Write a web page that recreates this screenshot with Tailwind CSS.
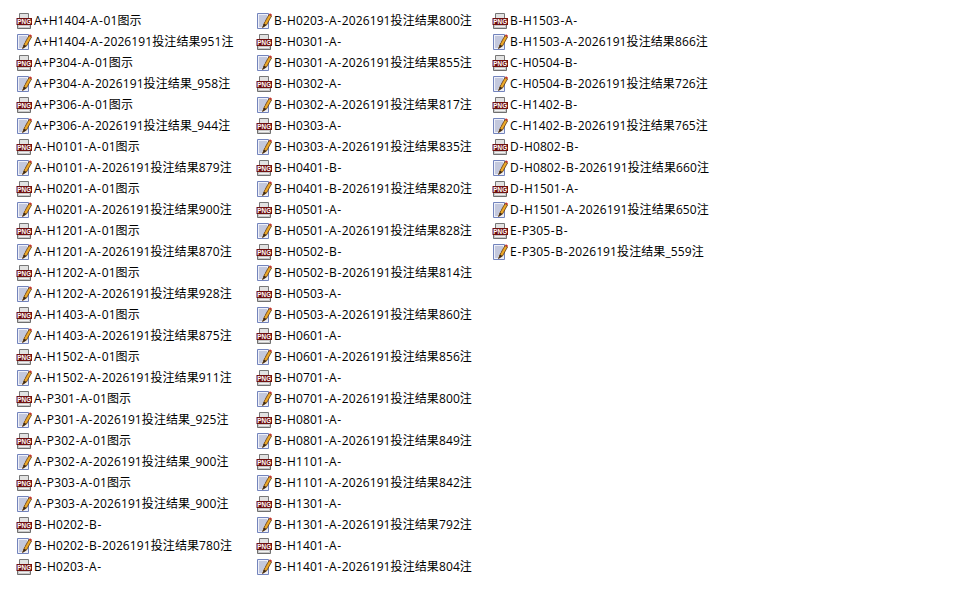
<!DOCTYPE html>
<html lang="zh-CN">
<head>
  <meta charset="UTF-8">
  <title>文件列表</title>
  <script src="https://cdn.jsdelivr.net/npm/@tailwindcss/browser@4"></script>
</head>
<body class="bg-white text-black font-['Open_Sans','Noto_Sans_CJK_SC',sans-serif] text-[12px] tracking-[.1px] overflow-hidden">
  <svg class="hidden">
    <symbol id="png" viewBox="0 0 16 16">
      <path d="M3.500 .5h9v5h-9z" fill="#e2e2e2" stroke="#777"/>
      <path d="M1.500 5.500h13v10h-13z" fill="#c8c8c8" stroke="#6f6f6f"/>
      <path d="M3 13.500h10" stroke="#f2f2f2"/>
      <rect x=".5" y="5" width="15.500" height="7" fill="#701010"/>
      <text x="1.200" y="11.300" textLength="14" lengthAdjust="spacingAndGlyphs" fill="#fff" font-size="7.500" font-weight="700" font-family="Liberation Sans">PNG</text>
    </symbol>
    <symbol id="txt" viewBox="0 0 16 16">
      <path d="M1.500 .5h11v15h-11z" fill="#eef0f8" stroke="#7384bd"/>
      <path d="M3 3h8M3 5h8M3 7h7M3 9h5M3 11h4M3 13h3" stroke="#98a0c2"/>
      <path d="M6.500 14.500 8 10.500 13 1.500 15.500 3 10.500 12z" fill="#eda928" stroke="#5e3610" stroke-width=".8"/>
      <path d="M13 1.500 15.500 3l.5-1.200L14 .3z" fill="#c8322c"/>
      <path d="M6.500 14.500 8 10.500 10.500 12z" fill="#3a2a1a"/>
    </symbol>
  </svg>
  <div id="list" class="flex items-start pt-[10px] pl-[16px]"></div>
  <script>
    // nome do arquivo por coluna: "p" = png, "t" = texto
    const R = '投注结果'
    const columns = [
      ['p:A+H1404-A-01图示','t:A+H1404-A-2026191'+R+'951注','p:A+P304-A-01图示','t:A+P304-A-2026191'+R+'_958注','p:A+P306-A-01图示','t:A+P306-A-2026191'+R+'_944注','p:A-H0101-A-01图示','t:A-H0101-A-2026191'+R+'879注','p:A-H0201-A-01图示','t:A-H0201-A-2026191'+R+'900注','p:A-H1201-A-01图示','t:A-H1201-A-2026191'+R+'870注','p:A-H1202-A-01图示','t:A-H1202-A-2026191'+R+'928注','p:A-H1403-A-01图示','t:A-H1403-A-2026191'+R+'875注','p:A-H1502-A-01图示','t:A-H1502-A-2026191'+R+'911注','p:A-P301-A-01图示','t:A-P301-A-2026191'+R+'_925注','p:A-P302-A-01图示','t:A-P302-A-2026191'+R+'_900注','p:A-P303-A-01图示','t:A-P303-A-2026191'+R+'_900注','p:B-H0202-B-','t:B-H0202-B-2026191'+R+'780注','p:B-H0203-A-'],
      ['t:B-H0203-A-2026191'+R+'800注','p:B-H0301-A-','t:B-H0301-A-2026191'+R+'855注','p:B-H0302-A-','t:B-H0302-A-2026191'+R+'817注','p:B-H0303-A-','t:B-H0303-A-2026191'+R+'835注','p:B-H0401-B-','t:B-H0401-B-2026191'+R+'820注','p:B-H0501-A-','t:B-H0501-A-2026191'+R+'828注','p:B-H0502-B-','t:B-H0502-B-2026191'+R+'814注','p:B-H0503-A-','t:B-H0503-A-2026191'+R+'860注','p:B-H0601-A-','t:B-H0601-A-2026191'+R+'856注','p:B-H0701-A-','t:B-H0701-A-2026191'+R+'800注','p:B-H0801-A-','t:B-H0801-A-2026191'+R+'849注','p:B-H1101-A-','t:B-H1101-A-2026191'+R+'842注','p:B-H1301-A-','t:B-H1301-A-2026191'+R+'792注','p:B-H1401-A-','t:B-H1401-A-2026191'+R+'804注'],
      ['p:B-H1503-A-','t:B-H1503-A-2026191'+R+'866注','p:C-H0504-B-','t:C-H0504-B-2026191'+R+'726注','p:C-H1402-B-','t:C-H1402-B-2026191'+R+'765注','p:D-H0802-B-','t:D-H0802-B-2026191'+R+'660注','p:D-H1501-A-','t:D-H1501-A-2026191'+R+'650注','p:E-P305-B-','t:E-P305-B-2026191'+R+'_559注']
    ]
    // colunas com larguras diferentes, como no explorer
    const widths = ['w-[240px]', 'w-[236px]', 'w-[236px]']
    document.querySelector('#list').innerHTML = columns.map((col, i) =>
      '<div class="flex flex-col ' + widths[i] + '">' + col.map(item => {
        const kind = item[0]
        // hifen um pouco mais largo que o da fonte
        const name = item.slice(2).replace(/-/g, '<span class="px-[.6px]">-</span>')
        return '<div class="flex items-center h-[21px] gap-[2px] whitespace-nowrap"><svg class="w-4 h-4 shrink-0"><use href="#' + (kind === 'p' ? 'png' : 'txt') + '"/></svg><span>' + name + '</span></div>'
      }).join('') + '</div>'
    ).join('')
  </script>
</body>
</html>
